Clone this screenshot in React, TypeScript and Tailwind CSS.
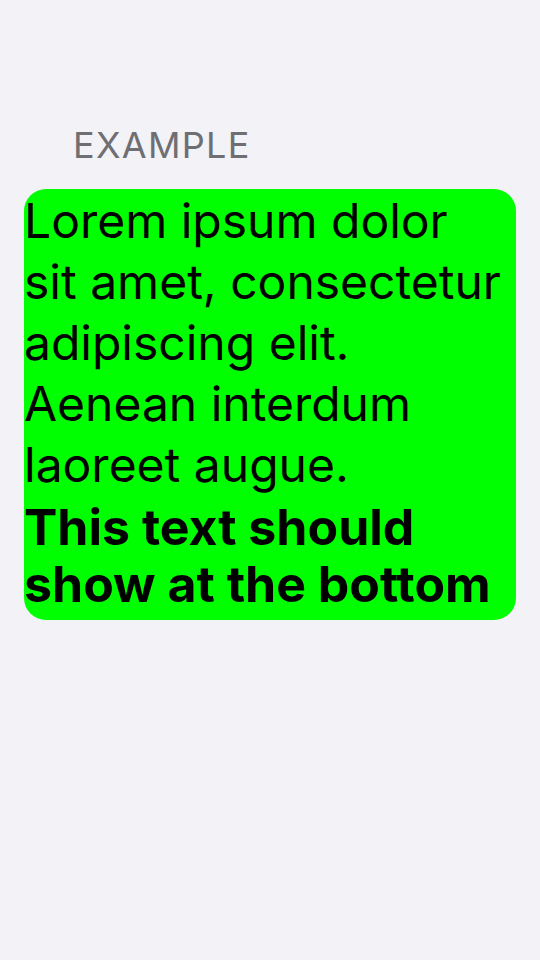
export default function App() {
  return (
    <div className="min-h-[960px] w-full bg-[#f2f2f7] font-['Inter',sans-serif]">
      <div className="px-6 pt-[123px]">
        <p className="pl-[49px] text-[36px] leading-[44px] tracking-[1.3px] text-[#6e6e73]">EXAMPLE</p>
        <div className="mt-[22px] overflow-hidden rounded-[22px] bg-[#00ff00] pt-px pb-[7px] text-black">
          <p className="text-[48px] leading-[61px]">
            Lorem ipsum dolor
            <br />
            sit amet, consectetur adipiscing elit. Aenean interdum laoreet augue.
          </p>
          <p className="mt-[4px] text-[50px] font-bold leading-[57px]">This text should show at the bottom</p>
        </div>
      </div>
    </div>
  );
}
